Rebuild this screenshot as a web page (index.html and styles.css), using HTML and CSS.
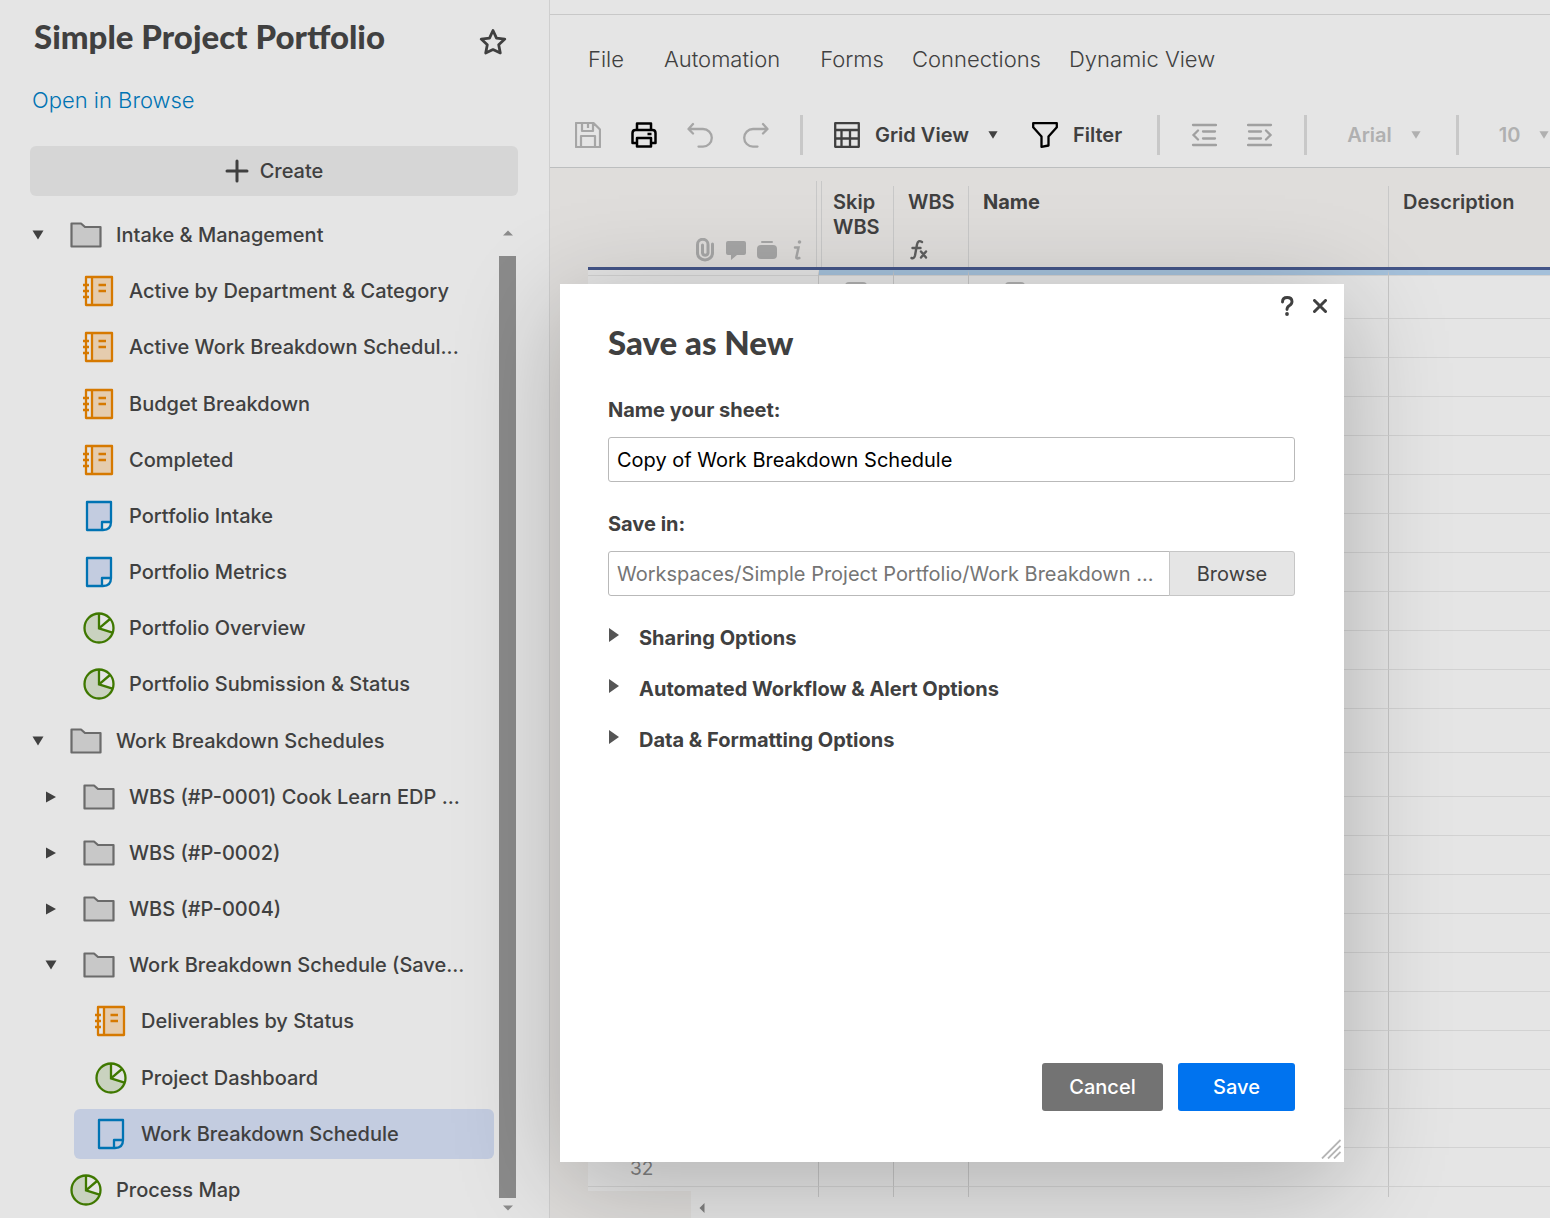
FILE: index.html
```html
<!DOCTYPE html>
<html lang="en">
<head>
<meta charset="utf-8">
<title>Work Breakdown Schedule</title>
<link rel="stylesheet" href="styles.css">
</head>
<body>
<svg class="defs" aria-hidden="true">
  <symbol id="folder" viewBox="0 0 32 32"><path d="M1.500 4.500h9.500l4 3.500h15.500v19.500h-29z" fill="#c8c8c8" stroke="#6b6b6b" stroke-width="2.200" stroke-linejoin="round"/></symbol>
  <symbol id="report" viewBox="0 0 32 32"><path d="M3 2h5v28h-5z" fill="#e5e5e5"/><path d="M8 2h21v28h-21z" fill="#e5ccae"/><path d="M3 2h26v28h-26zM9 2v28M15.500 10h7.500M15.500 16h7.500M0 10h6M0 16h6M0 22h6" fill="none" stroke="#d67900" stroke-width="2.300" stroke-linejoin="round"/></symbol>
  <symbol id="sheet" viewBox="0 0 32 32"><path d="M4 2h24v20q0 8-8 8h-16z" fill="#c3cce0"/><path d="M19 30v-8h9q0 8-9 8z" fill="#e5e5e5"/><path d="M4 2h24v20q0 8-8 8h-16zM19 30v-8h9" fill="none" stroke="#0073b3" stroke-width="2.300" stroke-linejoin="round"/></symbol>
  <symbol id="dash" viewBox="0 0 32 32"><circle cx="16" cy="16" r="14.500" fill="#c9d2bf"/><path d="M16 1.500a14.500 14.500 0 0 1 13.500 19.200l-13.500-4.400z" fill="#e5e5e5"/><circle cx="16" cy="16" r="14.500" fill="none" stroke="#3f7800" stroke-width="2.300"/><path d="M16 1.500v14.800l13.500 4.400M16 16.300l11-9.300" fill="none" stroke="#3f7800" stroke-width="2.300"/></symbol>
  <symbol id="down" viewBox="0 0 12 12"><path d="M0.500 1.500h11l-5.500 9z" fill="currentColor"/></symbol>
  <symbol id="right" viewBox="0 0 12 12"><path d="M1 0.500v11l10-5.500z" fill="currentColor"/></symbol>
</svg>

<div class="app">
  <aside class="sidebar">
    <header class="side-head">
      <h1 class="side-title">Simple Project Portfolio</h1>
      <button class="icon-btn" aria-label="Favorite"><svg width="28" height="28" viewBox="0 0 28 28"><path d="M14 2.500l3.500 7.600 8.300 1-6.100 5.700 1.600 8.200-7.300-3.400-7.300 3.400 1.600-8.200-6.100-5.700 8.300-1z" fill="none" stroke="#404040" stroke-width="2.800" stroke-linejoin="round"/></svg></button>
    </header>
    <a class="browse-link" href="#">Open in Browse</a>
    <button class="create"><svg width="24" height="24" viewBox="0 0 24 24"><path d="M12 2v20M2 12h20" stroke="#404040" stroke-width="3" stroke-linecap="round"/></svg>Create</button>
    <div class="tree-wrap">
      <ul class="tree">
        <li class="node l0"><button class="twist" aria-label="Collapse"><svg><use href="#down"/></svg></button><a href="#"><svg><use href="#folder"/></svg>Intake &amp; Management</a></li>
        <li class="node l1"><span class="twist"></span><a href="#"><svg><use href="#report"/></svg>Active by Department &amp; Category</a></li>
        <li class="node l1"><span class="twist"></span><a href="#"><svg><use href="#report"/></svg>Active Work Breakdown Schedul...</a></li>
        <li class="node l1"><span class="twist"></span><a href="#"><svg><use href="#report"/></svg>Budget Breakdown</a></li>
        <li class="node l1"><span class="twist"></span><a href="#"><svg><use href="#report"/></svg>Completed</a></li>
        <li class="node l1"><span class="twist"></span><a href="#"><svg><use href="#sheet"/></svg>Portfolio Intake</a></li>
        <li class="node l1"><span class="twist"></span><a href="#"><svg><use href="#sheet"/></svg>Portfolio Metrics</a></li>
        <li class="node l1"><span class="twist"></span><a href="#"><svg><use href="#dash"/></svg>Portfolio Overview</a></li>
        <li class="node l1"><span class="twist"></span><a href="#"><svg><use href="#dash"/></svg>Portfolio Submission &amp; Status</a></li>
        <li class="node l0"><button class="twist" aria-label="Collapse"><svg><use href="#down"/></svg></button><a href="#"><svg><use href="#folder"/></svg>Work Breakdown Schedules</a></li>
        <li class="node l1"><button class="twist" aria-label="Expand"><svg><use href="#right"/></svg></button><a href="#"><svg><use href="#folder"/></svg>WBS (#P-0001) Cook Learn EDP ...</a></li>
        <li class="node l1"><button class="twist" aria-label="Expand"><svg><use href="#right"/></svg></button><a href="#"><svg><use href="#folder"/></svg>WBS (#P-0002)</a></li>
        <li class="node l1"><button class="twist" aria-label="Expand"><svg><use href="#right"/></svg></button><a href="#"><svg><use href="#folder"/></svg>WBS (#P-0004)</a></li>
        <li class="node l1"><button class="twist" aria-label="Collapse"><svg><use href="#down"/></svg></button><a href="#"><svg><use href="#folder"/></svg>Work Breakdown Schedule (Save...</a></li>
        <li class="node l2"><span class="twist"></span><a href="#"><svg><use href="#report"/></svg>Deliverables by Status</a></li>
        <li class="node l2"><span class="twist"></span><a href="#"><svg><use href="#dash"/></svg>Project Dashboard</a></li>
        <li class="node l2"><span class="twist"></span><a class="selected" href="#" aria-current="page"><svg viewBox="0 0 32 32"><path d="M4 2h24v20q0 8-8 8h-16zM19 30v-8h9" fill="none" stroke="#0073b3" stroke-width="2.300" stroke-linejoin="round"/></svg>Work Breakdown Schedule</a></li>
        <li class="node l0"><span class="twist"></span><a href="#"><svg><use href="#dash"/></svg>Process Map</a></li>
      </ul>
      <div class="vscroll" aria-hidden="true">
        <svg width="10" height="6" viewBox="0 0 10 6"><path d="M0 5.500l5-5 5 5z" fill="#8b8b8b"/></svg>
        <span class="thumb"></span>
        <svg width="10" height="6" viewBox="0 0 10 6"><path d="M0 0.500l5 5 5-5z" fill="#8b8b8b"/></svg>
      </div>
    </div>
  </aside>

  <main class="main">
    <nav class="menu">
      <a href="#">File</a><a href="#">Automation</a><a href="#">Forms</a><a class="near" href="#">Connections</a><a class="near" href="#">Dynamic View</a>
    </nav>
    <div class="toolbar">
      <div class="tools">
        <button class="icon-btn" aria-label="Save"><svg width="26" height="26" viewBox="0 0 26 26" fill="none" stroke="#a6a6a6" stroke-width="2.200" stroke-linejoin="round"><path d="M1 1h17.500l6.500 6.500v17.500h-24zM7 1v8h11v-8M13 2v4M6 25v-11h14v11"/></svg></button>
        <button class="icon-btn" aria-label="Print"><svg width="26" height="26" viewBox="0 0 26 26" fill="none" stroke="#000" stroke-width="2.500" stroke-linejoin="round"><path d="M6 8v-6.500h14v6.500M6 21h-4.500v-10q0-3 3-3h17q3 0 3 3v10h-4.500M6 16h14v8.500h-14zM16.500 12h4"/></svg></button>
        <button class="icon-btn" aria-label="Undo"><svg width="26" height="26" viewBox="0 0 26 26" fill="none" stroke="#a6a6a6" stroke-width="2.300" stroke-linecap="round" stroke-linejoin="round"><path d="M6 2l-4.500 5 4.500 4.500M2 7h14a8.800 8.800 0 0 1 0 17.600h-4.500"/></svg></button>
        <button class="icon-btn" aria-label="Redo"><svg width="26" height="26" viewBox="0 0 26 26" fill="none" stroke="#a6a6a6" stroke-width="2.300" stroke-linecap="round" stroke-linejoin="round"><path d="M20 2l4.500 5-4.500 4.500M24 7h-14a8.800 8.800 0 0 0 0 17.600h4.500"/></svg></button>
      </div>
      <span class="sep"></span>
      <button class="tool-btn view"><svg width="26" height="26" viewBox="0 0 26 26" fill="none" stroke="#404040" stroke-width="2.300" stroke-linejoin="round"><path d="M1.200 1.200h23.600v23.600h-23.600zM1 8h24M1 16.500h24M7.500 8v17M16 8v17"/></svg>Grid View<svg class="caret" width="10" height="10"><use href="#down"/></svg></button>
      <button class="tool-btn"><svg width="26" height="26" viewBox="0 0 26 26" fill="none" stroke="#000" stroke-width="2.300" stroke-linejoin="round"><path d="M1.200 1.200h23.600v4l-8.300 9.300v9l-7 1.300v-10.300l-8.300-9.300z"/></svg>Filter</button>
      <span class="sep"></span>
      <div class="tools">
        <button class="icon-btn" aria-label="Outdent"><svg width="26" height="26" viewBox="0 0 26 26" fill="none" stroke="#a0a0a0" stroke-width="2.300" stroke-linecap="round"><path d="M2 3h23M12 9.500h12M12 16.500h12M2 23h23M7 8.500l-4.500 4.500 4.500 4.500"/></svg></button>
        <button class="icon-btn" aria-label="Indent"><svg width="26" height="26" viewBox="0 0 26 26" fill="none" stroke="#a0a0a0" stroke-width="2.300" stroke-linecap="round"><path d="M1 3h23M2 9.500h12M2 16.500h12M1 23h23M19 8.500l4.500 4.500-4.500 4.500"/></svg></button>
      </div>
      <span class="sep"></span>
      <button class="tool-btn muted">Arial<svg class="caret" width="10" height="10"><use href="#down"/></svg></button>
      <span class="sep"></span>
      <button class="tool-btn muted">10<svg class="caret" width="10" height="10"><use href="#down"/></svg></button>
    </div>
    <div class="sheet">
      <table class="grid">
        <colgroup><col class="c-num"><col class="c-small"><col class="c-small"><col class="c-name"><col></colgroup>
        <thead>
          <tr>
            <th class="corner"><div class="row-icons">
              <svg width="20" height="24" viewBox="0 0 20 24" fill="none" stroke="#a6a6a6" stroke-width="3" stroke-linecap="round"><path d="M17.500 6v9a7.500 7 0 0 1-15 0v-8.500a5 5 0 0 1 10.500 0v8.500a2.800 2.800 0 0 1-5.500 0v-8"/></svg>
              <svg width="20" height="20" viewBox="0 0 20 20" fill="#a6a6a6"><path d="M2 1h16q2 0 2 2v10q0 2-2 2h-7l-6 5v-5h-3q-2 0-2-2v-10q0-2 2-2z"/></svg>
              <svg width="20" height="20" viewBox="0 0 20 20" fill="#a6a6a6"><rect x="4" y="1" width="12" height="2" rx="1"/><rect x="0" y="5" width="20" height="14" rx="4"/></svg>
              <svg width="20" height="22" viewBox="-5 0 20 22"><circle cx="6.500" cy="3" r="1.800" fill="#a6a6a6"/><path d="M2 8.500h3.500l-2.200 10q0 1.500 3 0.500" fill="none" stroke="#a6a6a6" stroke-width="2.500" stroke-linecap="round"/></svg>
            </div></th>
            <th class="unfrozen">Skip WBS</th>
            <th><div class="fx-head">WBS<svg width="18" height="22" viewBox="0 0 18 22" fill="none" stroke="#5e5e5e" stroke-width="2.400" stroke-linecap="round"><path d="M12 3q-4-2.500-5 2.500l-2 11q-0.800 3.500-3.500 2.500M2.500 9h8M11 12.500l5 6M16 12.500l-5 6"/></svg></div></th>
            <th class="primary">Name</th>
            <th>Description</th>
          </tr>
        </thead>
        <tbody>
          <tr class="tall first"><td></td><td><input class="tick" type="checkbox" aria-label="Skip WBS"></td><td></td><td><span class="box"></span></td><td></td></tr>
          <tr><td></td><td></td><td></td><td></td><td></td></tr>
          <tr><td></td><td></td><td></td><td></td><td></td></tr>
          <tr><td></td><td></td><td></td><td></td><td></td></tr>
          <tr><td></td><td></td><td></td><td></td><td></td></tr>
          <tr><td></td><td></td><td></td><td></td><td></td></tr>
          <tr><td></td><td></td><td></td><td></td><td></td></tr>
          <tr><td></td><td></td><td></td><td></td><td></td></tr>
          <tr><td></td><td></td><td></td><td></td><td></td></tr>
          <tr><td></td><td></td><td></td><td></td><td></td></tr>
          <tr><td></td><td></td><td></td><td></td><td></td></tr>
          <tr class="tall"><td></td><td></td><td></td><td></td><td></td></tr>
          <tr class="tall"><td></td><td></td><td></td><td></td><td></td></tr>
          <tr><td></td><td></td><td></td><td></td><td></td></tr>
          <tr><td></td><td></td><td></td><td></td><td></td></tr>
          <tr><td></td><td></td><td></td><td></td><td></td></tr>
          <tr><td></td><td></td><td></td><td></td><td></td></tr>
          <tr><td></td><td></td><td></td><td></td><td></td></tr>
          <tr><td></td><td></td><td></td><td></td><td></td></tr>
          <tr><td></td><td></td><td></td><td></td><td></td></tr>
          <tr><td></td><td></td><td></td><td></td><td></td></tr>
          <tr><td></td><td></td><td></td><td></td><td></td></tr>
          <tr><td class="num">32</td><td></td><td></td><td></td><td></td></tr>
          <tr class="end"><td></td><td></td><td></td><td></td><td></td></tr>
        </tbody>
      </table>
      <div class="hscroll" aria-hidden="true"><svg width="6" height="10" viewBox="0 0 6 10"><path d="M5.500 0v10l-5-5z" fill="#808080"/></svg></div>
    </div>
  </main>
</div>

<div class="dialog" role="dialog" aria-labelledby="dialog-title">
  <div class="dialog-tools">
    <button class="icon-btn" aria-label="Help"><svg width="14" height="20" viewBox="0 0 14 20"><path d="M2.500 6q0-4.500 4.700-4.500t4.800 4q0 2.500-2.500 4t-2.500 4" fill="none" stroke="#404040" stroke-width="2.900" stroke-linecap="round"/><circle cx="7" cy="18" r="1.900" fill="#404040"/></svg></button>
    <button class="icon-btn" aria-label="Close"><svg width="14" height="14" viewBox="0 0 14 14"><path d="M1.500 1.500l11 11M12.500 1.500l-11 11" stroke="#404040" stroke-width="3" stroke-linecap="round"/></svg></button>
  </div>
  <form class="dialog-body">
    <h2 class="dialog-title" id="dialog-title">Save as New</h2>
    <label class="label" for="sheet-name">Name your sheet:</label>
    <input class="field" id="sheet-name" type="text" value="Copy of Work Breakdown Schedule">
    <label class="label" for="save-in">Save in:</label>
    <div class="picker">
      <input class="field path" id="save-in" type="text" readonly value="Workspaces/Simple Project Portfolio/Work Breakdown ...">
      <button class="browse" type="button">Browse</button>
    </div>
    <div class="options">
      <button class="option" type="button"><svg width="12" height="14" viewBox="0 0 12 14"><path d="M1 0v14l10-7z" fill="#555"/></svg>Sharing Options</button>
      <button class="option" type="button"><svg width="12" height="14" viewBox="0 0 12 14"><path d="M1 0v14l10-7z" fill="#555"/></svg>Automated Workflow &amp; Alert Options</button>
      <button class="option" type="button"><svg width="12" height="14" viewBox="0 0 12 14"><path d="M1 0v14l10-7z" fill="#555"/></svg>Data &amp; Formatting Options</button>
    </div>
    <div class="actions">
      <button class="btn cancel" type="button">Cancel</button>
      <button class="btn save" type="submit">Save</button>
    </div>
  </form>
  <svg class="grip" width="20" height="20" viewBox="0 0 20 20" aria-hidden="true"><path d="M1 19.500l18.500-18.500M7 19.500l12.500-12.500M13 19.500l6.500-6.500" stroke="#b5b5b5" stroke-width="1.800"/></svg>
</div>
</body>
</html>
```
FILE: styles.css
```css
* { box-sizing: border-box; }

body {
  margin: 0;
  background: #e5e5e5;
  color: #404040;
  font: 500 20px/24px Inter, "Liberation Sans", sans-serif;
}

a { color: inherit; text-decoration: none; }

button {
  margin: 0;
  padding: 0;
  border: 0;
  background: none;
  color: inherit;
  font: inherit;
}

.defs { position: absolute; width: 0; height: 0; }
.icon-btn { display: flex; }

.app {
  display: grid;
  grid-template-columns: minmax(320px, 550px) minmax(0, 1fr);
  height: 100vh;
  overflow: hidden;
}

/* Sidebar */
.sidebar {
  display: flex;
  flex-direction: column;
  min-height: 0;
  padding: 16px 31px 0 30px;
  border-right: 1px solid #cfcfcf;
}

.side-head {
  display: flex;
  justify-content: space-between;
  align-items: center;
  height: 40px;
  padding: 0 11px 0 4px;
}

.side-title {
  margin: 0;
  font: 900 33px/40px Lato, sans-serif;
  white-space: nowrap;
}

.side-head .icon-btn { padding-top: 12px; }

.browse-link {
  align-self: flex-start;
  margin-top: 30px;
  padding: 0 2px;
  color: #0073b3;
  font-size: 22px;
  font-weight: 300;
  line-height: 28px;
}

.create {
  display: flex;
  flex: none;
  justify-content: center;
  align-items: center;
  gap: 11px;
  height: 50px;
  margin-top: 32px;
  border-radius: 6px;
  background: #d6d6d6;
}

.tree-wrap {
  display: flex;
  flex: 1;
  gap: 5px;
  min-height: 0;
  padding: 11px 2px 0 0;
}

.tree {
  display: flex;
  flex: 1;
  flex-direction: column;
  min-width: 0;
  margin: 0;
  padding: 0;
  list-style: none;
}

.node {
  display: flex;
  flex: 1;
  align-items: center;
  white-space: nowrap;
}

.l0 { padding-left: 2px; }
.l1 { padding-left: 15px; }
.l2 { padding-left: 27px; }

.twist { display: flex; flex: none; width: 12px; }
.twist svg { width: 12px; height: 12px; }

.node a {
  display: flex;
  flex: 1;
  align-items: center;
  gap: 14px;
  height: 50px;
  margin-left: 5px;
  padding-left: 21px;
  border-radius: 6px;
}

.node a svg { flex: none; width: 32px; height: 32px; }
.node .selected { background: #c3cce0; }

.vscroll {
  display: flex;
  flex-direction: column;
  align-items: center;
  gap: 20px;
  width: 17px;
  padding: 23px 0 7px;
}

.vscroll svg { flex: none; }
.vscroll svg:last-child { margin-top: -13px; }
.thumb { flex: 1; width: 17px; background: #8b8b8b; }

/* Menu and toolbar */
.main {
  display: flex;
  flex-direction: column;
  min-width: 0;
  min-height: 0;
  padding-top: 14px;
  overflow: hidden;
}

.menu {
  display: flex;
  flex: none;
  gap: 40px;
  height: 90px;
  padding: 30px 38px;
  border-top: 1px solid #c8c8c8;
  font-size: 22px;
  font-weight: 300;
  line-height: 28px;
  white-space: nowrap;
}

.menu .near { margin-left: -12px; }

.toolbar {
  display: flex;
  flex: none;
  align-items: center;
  height: 64px;
  padding: 0 0 2px 25px;
  border-bottom: 1px solid #bcbebf;
  font-weight: 600;
  overflow: hidden;
}

.tools { display: flex; gap: 30px; }
.sep { flex: none; width: 3px; height: 40px; margin: 0 31px; background: #c8c8c8; }

.tool-btn {
  display: flex;
  flex: none;
  align-items: center;
  gap: 15px;
  margin-right: 4px;
}

.tool-btn .caret { margin-left: 4px; }
.tool-btn.view { margin-right: 34px; }
.tool-btn.muted { margin-left: 9px; color: #b0b0b0; }

/* Sheet */
.sheet {
  flex: 1;
  min-height: 0;
  padding-left: 38px;
  background: #dfdddb;
  overflow: hidden;
}

.grid {
  width: 100%;
  min-width: 962px;
  table-layout: fixed;
  border-collapse: separate;
  border-spacing: 0;
}

.c-num { width: 231px; }
.c-small { width: 75px; }
.c-name { width: 420px; }

/* Column rules start below the top edge of the header */
.grid th {
  height: 102px;
  padding: 22px 12px 0 14px;
  border-bottom: 3px solid #445588;
  background: linear-gradient(#c8c8c8, #c8c8c8) right 18px / 1px 100% no-repeat;
  font-weight: 600;
  line-height: 25px;
  text-align: left;
  vertical-align: top;
}

.grid th:last-child { background: none; }
.grid .primary { font-weight: 700; }

.grid .corner {
  padding-right: 11px;
  background-position: right 2px top 13px;
  vertical-align: bottom;
}

.grid .unfrozen {
  background:
    linear-gradient(#c8c8c8, #c8c8c8) right 18px / 1px 100% no-repeat,
    linear-gradient(#c8c8c8, #c8c8c8) 2px 13px / 1px 100% no-repeat;
}

.row-icons {
  display: flex;
  justify-content: flex-end;
  align-items: center;
  gap: 11px;
  padding-bottom: 5px;
}

.fx-head { display: flex; flex-direction: column; gap: 24px; }
.fx-head svg { margin-left: 2px; }

.grid td {
  height: 39px;
  padding: 0;
  border-right: 1px solid #c6c6c6;
  border-bottom: 1px solid #d2d2d2;
  background: #e5e5e5;
}

.grid td:last-child { border-right: 0; }
.grid .tall td { height: 44px; }

.grid .first td {
  height: 49px;
  padding-top: 7px;
  border-top: 5px solid #a4c0da;
  box-shadow: inset 0 1px #d2d2d2;
  vertical-align: top;
}

.grid .first td:first-child { border-top-color: #e5e5e5; }

.grid .num {
  padding: 4px 0 0 42px;
  color: #808080;
  font-size: 19px;
  font-weight: 400;
}

.grid .end td { height: 10px; border-bottom: 0; }
.grid .end td:first-child {
  background: linear-gradient(#dfdddb, #dfdddb) 0 4px / 103px 6px no-repeat #e5e5e5;
}

.tick,
.box {
  display: block;
  width: 22px;
  height: 22px;
  margin: 0 0 0 26px;
  border: 2px solid #b0b0b0;
  border-radius: 4px;
  appearance: none;
}

.box { width: 20px; margin-left: 36px; }

.hscroll {
  display: flex;
  height: 100px;
  margin-left: 103px;
  padding: 6px 8px;
  background: #e5e5e5;
}

/* Save as New dialog */
.dialog {
  position: absolute;
  top: 284px;
  left: 560px;
  display: flex;
  flex-direction: column;
  width: 784px;
  min-height: 878px;
  background: #fff;
  box-shadow: 0 20px 100px rgba(0, 0, 0, 0.24);
}

.dialog-tools {
  display: flex;
  justify-content: flex-end;
  align-items: center;
  gap: 19px;
  height: 40px;
  padding: 4px 17px 0;
}

.dialog-body {
  display: flex;
  flex: 1;
  flex-direction: column;
  padding: 0 49px 51px 48px;
}

.dialog-title {
  margin: 0 0 37px;
  font: 900 33px/36px Lato, sans-serif;
}

.label { margin-bottom: 13px; font-weight: 700; line-height: 27px; }

.field {
  width: 100%;
  height: 45px;
  margin: 0 0 29px;
  padding: 0 8px;
  border: 1px solid #b9b9b9;
  border-radius: 3px;
  background: #fff;
  color: #000;
  font: 400 20px/24px Inter, "Liberation Sans", sans-serif;
}

.picker { display: flex; }
.path { flex: 1; min-width: 0; margin: 0; border-radius: 3px 0 0 3px; color: #757575; }

.browse {
  width: 126px;
  margin-left: -1px;
  border: 1px solid #c6c6c6;
  border-radius: 0 3px 3px 0;
  background: #e5e5e5;
  font-weight: 400;
}

.options {
  display: flex;
  flex-direction: column;
  align-items: flex-start;
  gap: 27px;
  margin-top: 30px;
}

.option { display: flex; gap: 19px; font-weight: 700; }
.option svg { margin-top: 2px; }

.actions {
  display: flex;
  justify-content: flex-end;
  gap: 15px;
  margin-top: auto;
}

.btn { height: 48px; border-radius: 3px; color: #fff; }
.cancel { width: 121px; background: #737373; }
.save { width: 117px; background: #0073ef; }

.grip { position: absolute; right: 3px; bottom: 3px; }
```
